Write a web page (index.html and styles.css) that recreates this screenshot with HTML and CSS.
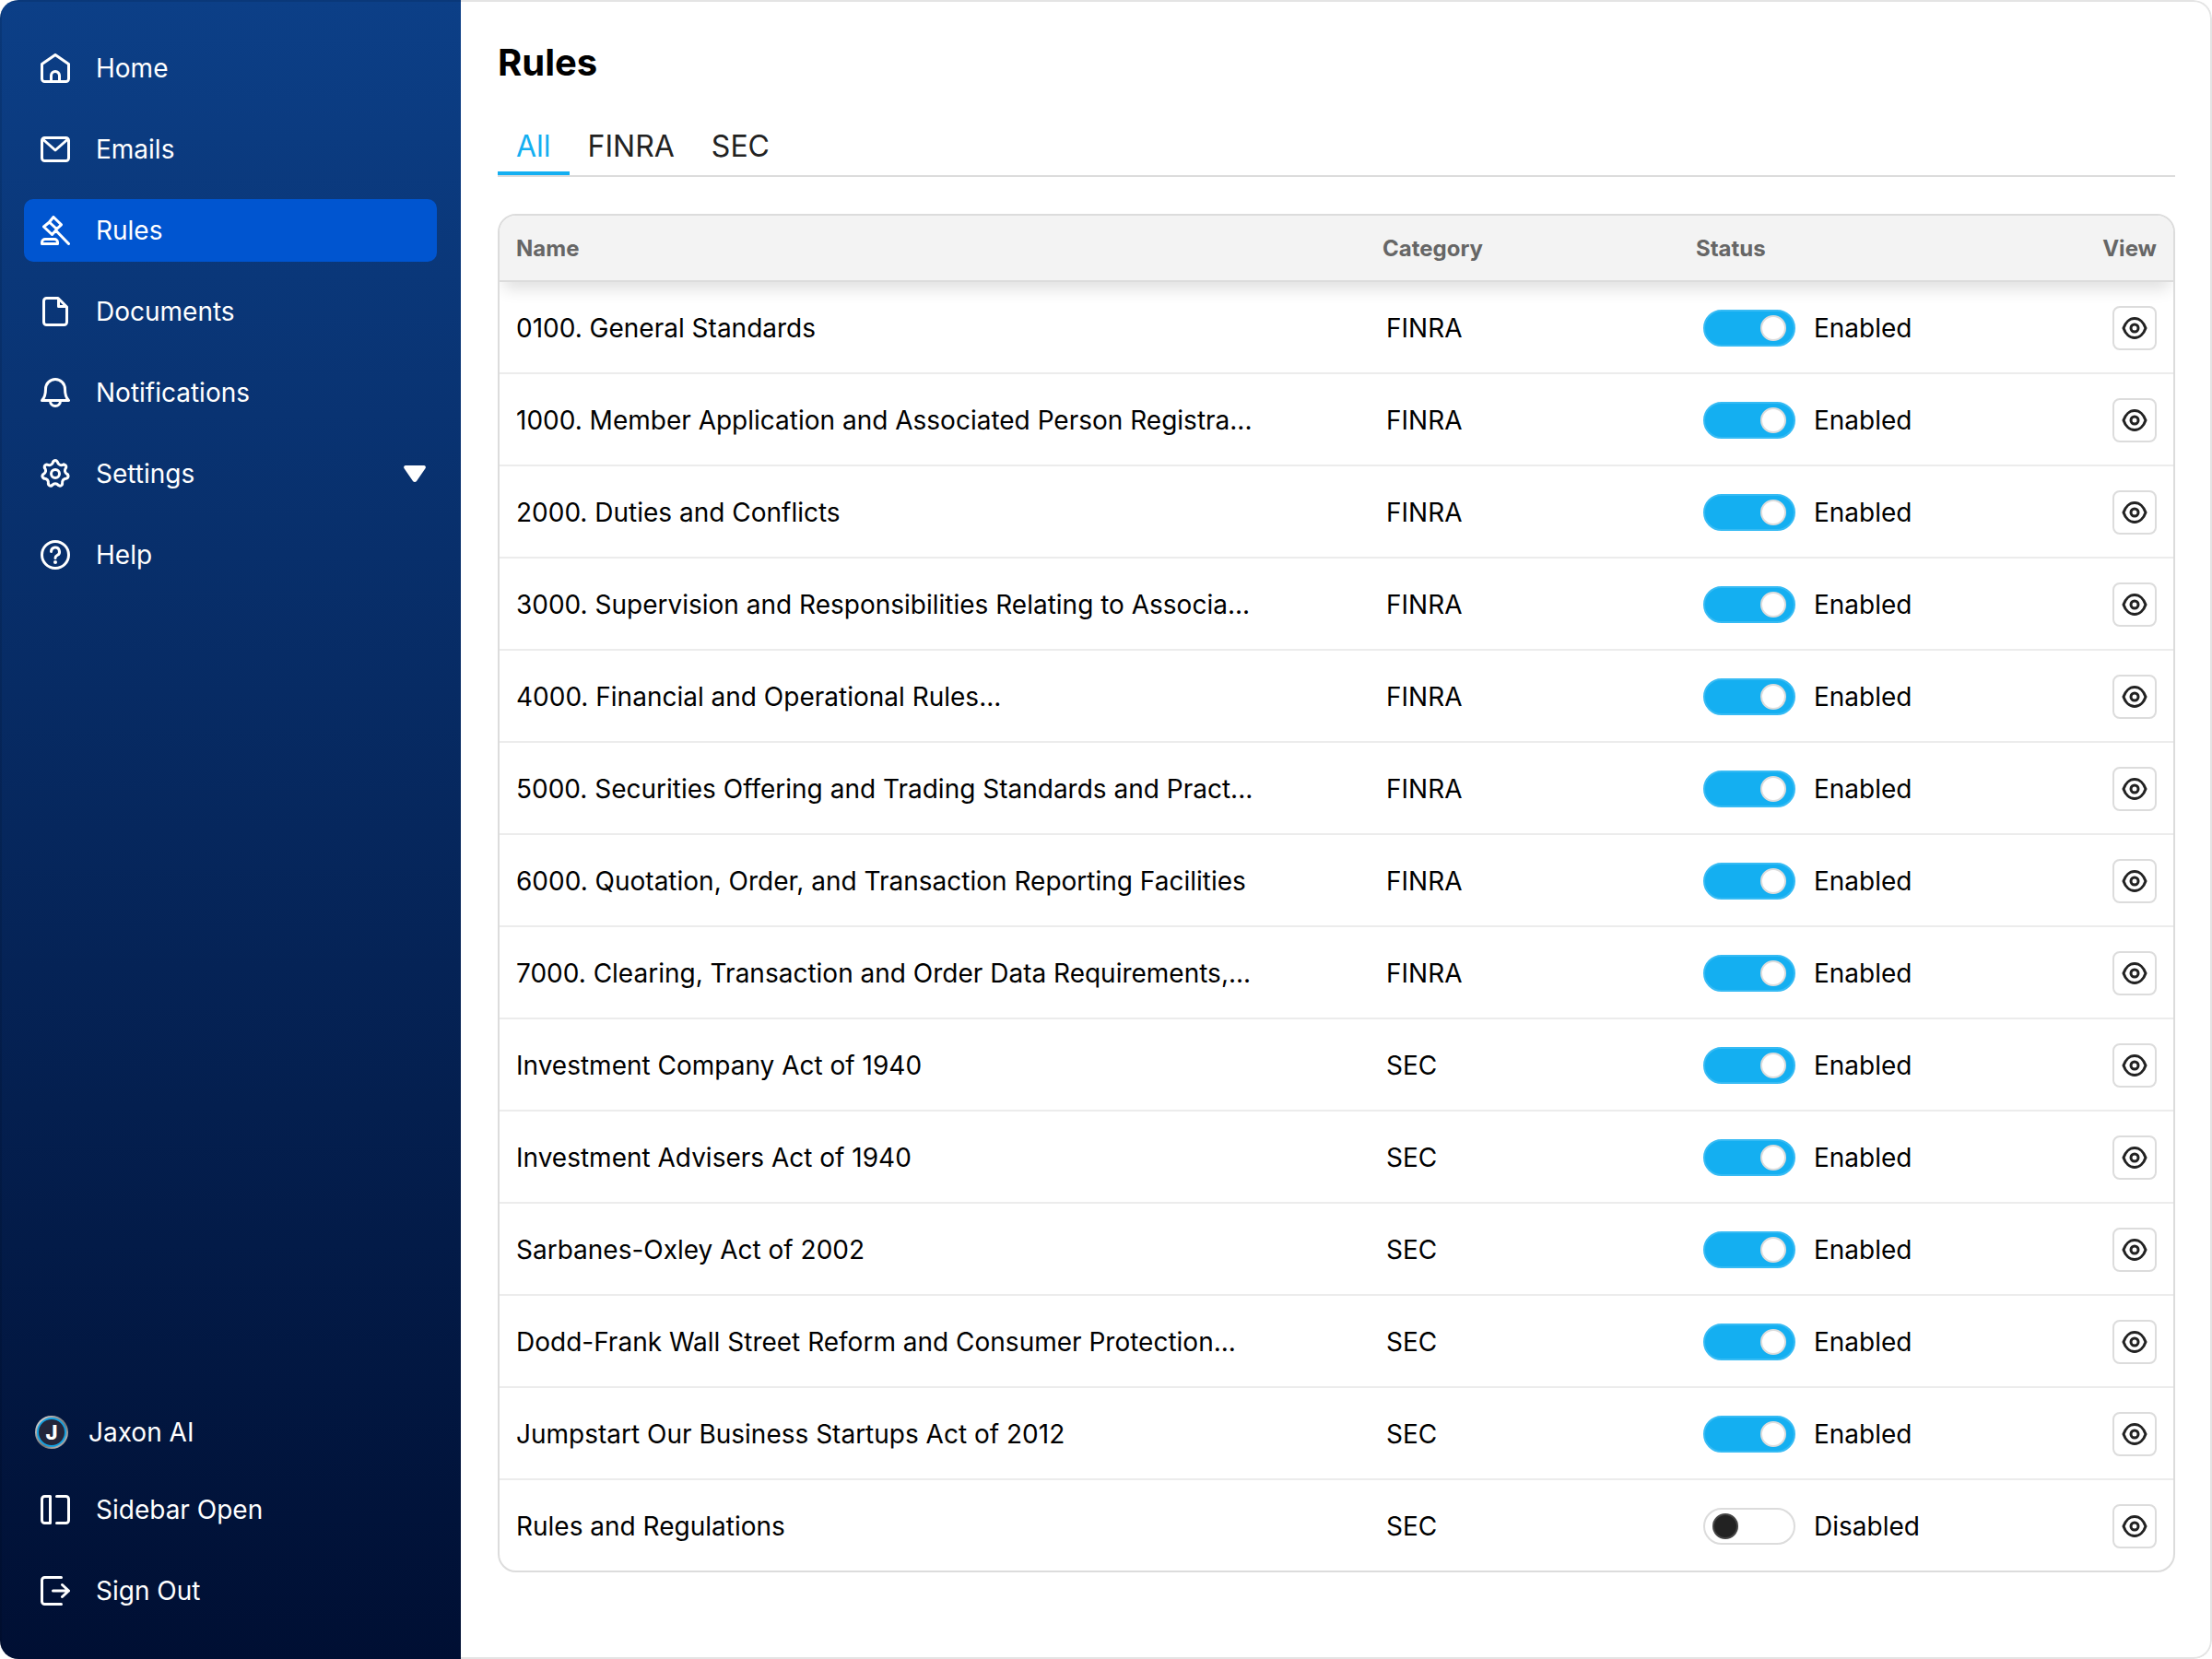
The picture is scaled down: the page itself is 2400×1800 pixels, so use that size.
FILE: index.html
```html
<!DOCTYPE html>
<html lang="en">
<head>
<meta charset="utf-8">
<title>Rules</title>
<link rel="stylesheet" href="styles.css">
</head>
<body>
<svg class="sprite" aria-hidden="true">
  <symbol id="eye" viewBox="0 0 28 28">
    <path d="M2 14C4 8 8.500 3.500 14 3.500S24 8 26 14C24 20 19.500 24.500 14 24.500S4 20 2 14Z" fill="none" stroke="currentColor" stroke-width="3" stroke-linejoin="round"/>
    <circle cx="14" cy="14" r="4" fill="none" stroke="currentColor" stroke-width="3"/>
  </symbol>
  <path id="tooth" d="M13.900 2.760A2.500 2.500 0 0 1 18.100 2.760Q19.820 8.070 25.040 6.110"/>
</svg>
<div class="app">
  <aside class="sidebar">
    <nav class="nav" aria-label="Main">
      <a class="nav-item" href="#home"><svg class="icon" viewBox="0 0 32 32"><path d="M1.500 11.500 16 1.500 30.500 11.500V27.500a3 3 0 0 1-3 3H4.500a3 3 0 0 1-3-3ZM11.500 30.500V24a4.500 4.500 0 0 1 9 0v6.500"/></svg>Home</a>
      <a class="nav-item" href="#emails"><svg class="icon" viewBox="0 0 32 32"><rect x="1.500" y="3.500" width="29" height="25" rx="3"/><path d="M3 5.500 16 17 29 5.500"/></svg>Emails</a>
      <a class="nav-item active" href="#rules" aria-current="page"><svg class="icon" viewBox="0 0 32 32"><path d="M14 1.500 22.500 9.800 17.500 14.500 9.500 7ZM9 7.500 3.500 12 12.500 20.500 17 15.500M17 16.500 30.500 30.500M1.500 30.500V29a3.500 3.500 0 0 1 3.500-3.500h10a3.500 3.500 0 0 1 3.500 3.500v1.500Z"/></svg>Rules</a>
      <a class="nav-item" href="#documents"><svg class="icon" viewBox="0 0 32 32"><path d="M19 1.500H6.500a3 3 0 0 0-3 3v23a3 3 0 0 0 3 3h19a3 3 0 0 0 3-3V11ZM19.500 2v8.500h8.500"/></svg>Documents</a>
      <a class="nav-item" href="#notifications"><svg class="icon" viewBox="0 0 32 32"><path d="M1.500 24.500C4 22 5.500 18 5.500 12a10.500 10.500 0 0 1 21 0c0 6 1.500 10 4 12.500ZM10.500 25a5.500 5.500 0 0 0 11 0"/></svg>Notifications</a>
      <a class="nav-item" href="#settings"><svg class="icon" viewBox="0 0 32 32"><use href="#tooth"/><use href="#tooth" transform="rotate(51.430 16 16)"/><use href="#tooth" transform="rotate(102.860 16 16)"/><use href="#tooth" transform="rotate(154.290 16 16)"/><use href="#tooth" transform="rotate(205.710 16 16)"/><use href="#tooth" transform="rotate(257.140 16 16)"/><use href="#tooth" transform="rotate(308.570 16 16)"/><circle cx="16" cy="16" r="4.500"/></svg>Settings<svg class="caret" viewBox="0 0 24 18"><path d="M2 0H22a2 2 0 0 1 1.600 3L14 17a2.500 2.500 0 0 1-4 0L.400 3A2 2 0 0 1 2 0Z"/></svg></a>
      <a class="nav-item" href="#help"><svg class="icon" viewBox="0 0 32 32"><circle cx="16" cy="16" r="14.500"/><path d="M11.500 12.500a4.500 4.500 0 1 1 6.500 4c-1.500.8-2 1.500-2 3"/><circle class="dot" cx="16" cy="24" r="2"/></svg>Help</a>
    </nav>
    <div class="nav">
      <a class="nav-item brand" href="#jaxon"><svg class="logo" viewBox="0 0 36 36" aria-hidden="true"><defs><linearGradient id="metal" x1="0" y1="0" x2="1" y2="1"><stop offset="0" stop-color="#eee"/><stop offset=".35" stop-color="#999"/><stop offset=".6" stop-color="#777"/><stop offset=".8" stop-color="#aaa"/><stop offset="1" stop-color="#777"/></linearGradient></defs><circle cx="18" cy="18" r="18" fill="url(#metal)"/><circle cx="18" cy="18" r="15" fill="#23253a" stroke="#14a0e0" stroke-width="2"/><text class="logo-letter" x="18" y="26" text-anchor="middle">J</text></svg>Jaxon AI</a>
      <button class="nav-item" type="button"><svg class="icon" viewBox="0 0 32 32"><path d="M10.500 1.500H4.500a3 3 0 0 0-3 3v23a3 3 0 0 0 3 3h6ZM17.500 1.500h10a3 3 0 0 1 3 3v23a3 3 0 0 1-3 3h-10"/></svg>Sidebar Open</button>
      <button class="nav-item" type="button"><svg class="icon" viewBox="0 0 32 32"><path d="M22.500 1.500H4.500a3 3 0 0 0-3 3v23a3 3 0 0 0 3 3h18M13.500 16h17M23.500 9.500 30.500 16 23.500 22.500"/></svg>Sign Out</button>
    </div>
  </aside>
  <main class="content">
    <h1 class="title">Rules</h1>
    <div class="tabs" role="tablist">
      <button class="tab selected" type="button" role="tab" aria-selected="true">All</button>
      <button class="tab" type="button" role="tab" aria-selected="false">FINRA</button>
      <button class="tab" type="button" role="tab" aria-selected="false">SEC</button>
    </div>
    <div class="card">
      <table class="rules">
        <colgroup><col><col class="col-category"><col class="col-status"><col class="col-view"></colgroup>
        <thead><tr><th>Name</th><th>Category</th><th>Status</th><th class="view">View</th></tr></thead>
        <tbody id="rows"></tbody>
      </table>
    </div>
  </main>
</div>
<script src="rules.js"></script>
</body>
</html>
```
FILE: styles.css
```css
*, *::before { box-sizing: border-box; }
body { margin: 0; background: #fff; font-family: Inter, "Liberation Sans", sans-serif; font-size: 28px; line-height: 34px; color: #000; }
.sprite { display: none; }
.app { display: flex; min-height: 100vh; border-radius: 20px; overflow: hidden; }
.sidebar { width: 500px; flex: none; display: flex; flex-direction: column; justify-content: space-between; padding: 40px 26px; background: linear-gradient(#0c3f87, #000f33); box-shadow: inset 2px 0 rgba(0, 0, 0, .1), inset 0 2px rgba(0, 0, 0, .1); }
.nav { display: flex; flex-direction: column; gap: 20px; }
.nav-item { display: flex; align-items: center; gap: 28px; height: 68px; padding: 0 12px 0 18px; border: 0; border-radius: 10px; background: none; color: #fff; font: inherit; text-decoration: none; }
.nav-item.active { background: #0055d0; }
.icon { width: 32px; height: 32px; flex: none; fill: none; stroke: #fff; stroke-width: 3; stroke-linecap: round; stroke-linejoin: round; }
.icon .dot { fill: #fff; stroke: none; }
.caret { width: 24px; height: 18px; margin-left: auto; fill: #fff; }
.nav-item.brand { gap: 22px; height: 60px; padding-left: 12px; }
.logo { width: 36px; height: 36px; }
.logo-letter { fill: #fff; font-size: 22px; font-weight: 800; }
.content { flex: 1; min-width: 0; padding: 46px 38px 80px 40px; border: 2px solid #e4e4e4; border-left: 0; border-radius: 0 20px 20px 0; }
.title { margin: 0; font-size: 40px; line-height: 40px; font-weight: 700; }
.tabs { display: flex; margin-top: 38px; border-bottom: 2px solid #dcdcdc; }
.tab { height: 64px; padding: 6px 20px 0; border: 0; border-bottom: 4px solid transparent; background: none; color: #222; font: inherit; font-size: 32px; }
.tab.selected { color: #14aff1; border-color: #14aff1; }
.card { margin-top: 40px; border: 2px solid #dcdcdc; border-radius: 20px; overflow: hidden; }
.rules { width: 100%; table-layout: fixed; border-collapse: separate; border-spacing: 0; }
.col-category { width: 340px; }
.col-status { width: 340px; }
.col-view { width: 196px; }
.rules thead { position: relative; box-shadow: 0 12px 16px -4px rgba(0, 0, 0, .12); }
.rules th { height: 72px; padding: 2px 18px 0; background: #f3f3f3; border-bottom: 2px solid #dcdcdc; color: #666; font-size: 24px; font-weight: 700; text-align: left; }
.rules td { height: 100px; padding: 2px 18px 0; border-bottom: 2px solid #ececec; }
.rules tr:last-child td { height: 98px; border-bottom: 0; }
.rules td:nth-child(2) { padding-left: 22px; }
.rules td:nth-child(3) { padding-left: 26px; }
.rules .view { text-align: right; }
.switch { display: flex; align-items: center; gap: 20px; }
.switch input { appearance: none; display: flex; align-items: center; width: 100px; height: 40px; margin: 0; padding: 0 8px; border: 2px solid #dcdcdc; border-radius: 20px; background: #fff; }
.switch input::before { content: ""; width: 28px; height: 28px; border-radius: 50%; background: #222; border: 2px solid #444; }
.switch input:checked { justify-content: flex-end; background: #14aff1; border-color: #36bbf4; }
.switch input:checked::before { background: #fff; border-color: #dcdcdc; }
.view-btn { display: inline-flex; align-items: center; justify-content: center; width: 48px; height: 48px; padding: 0; border: 2px solid #dcdcdc; border-radius: 8px; background: #fff; color: #222; vertical-align: middle; }
.view-btn svg { width: 28px; height: 28px; }
```
FILE: rules.js
```js
const rules = [
  ["0100. General Standards", "FINRA", true],
  ["1000. Member Application and Associated Person Registra...", "FINRA", true],
  ["2000. Duties and Conflicts", "FINRA", true],
  ["3000. Supervision and Responsibilities Relating to Associa...", "FINRA", true],
  ["4000. Financial and Operational Rules...", "FINRA", true],
  ["5000. Securities Offering and Trading Standards and Pract...", "FINRA", true],
  ["6000. Quotation, Order, and Transaction Reporting Facilities", "FINRA", true],
  ["7000. Clearing, Transaction and Order Data Requirements,...", "FINRA", true],
  ["Investment Company Act of 1940", "SEC", true],
  ["Investment Advisers Act of 1940", "SEC", true],
  ["Sarbanes-Oxley Act of 2002", "SEC", true],
  ["Dodd-Frank Wall Street Reform and Consumer Protection...", "SEC", true],
  ["Jumpstart Our Business Startups Act of 2012", "SEC", true],
  ["Rules and Regulations", "SEC", false],
];

document.getElementById("rows").innerHTML = rules.map(([name, category, on]) => `
  <tr>
    <td>${name}</td>
    <td>${category}</td>
    <td><label class="switch"><input type="checkbox" role="switch"${on ? " checked" : ""}>${on ? "Enabled" : "Disabled"}</label></td>
    <td class="view"><button class="view-btn" type="button" aria-label="View ${name}"><svg><use href="#eye"/></svg></button></td>
  </tr>`).join("");
```
